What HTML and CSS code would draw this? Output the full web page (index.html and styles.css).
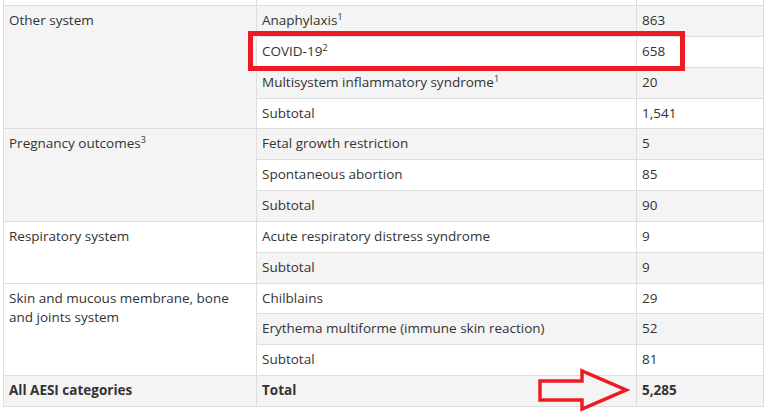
FILE: index.html
```html
<!DOCTYPE html>
<html>
<head>
<meta charset="utf-8">
<link rel="stylesheet" href="styles.css">
</head>
<body>
<div class="wrap">
<table class="aesi">
<colgroup><col class="c1"><col class="c2"><col class="c3"></colgroup>
<tbody>
<tr class="w"><td>&nbsp;</td><td>&nbsp;</td><td>&nbsp;</td></tr>
<tr class="g"><td rowspan="4">Other system</td><td>Anaphylaxis<sup>1</sup></td><td>863</td></tr>
<tr class="w"><td>COVID-19<sup>2</sup></td><td>658</td></tr>
<tr class="g"><td>Multisystem inflammatory syndrome<sup>1</sup></td><td>20</td></tr>
<tr class="w"><td>Subtotal</td><td>1,541</td></tr>
<tr class="g"><td rowspan="3">Pregnancy outcomes<sup>3</sup></td><td>Fetal growth restriction</td><td>5</td></tr>
<tr class="w"><td>Spontaneous abortion</td><td>85</td></tr>
<tr class="g"><td>Subtotal</td><td>90</td></tr>
<tr class="w"><td rowspan="2">Respiratory system</td><td>Acute respiratory distress syndrome</td><td>9</td></tr>
<tr class="g"><td>Subtotal</td><td>9</td></tr>
<tr class="w"><td rowspan="3">Skin and mucous membrane, bone and joints system</td><td>Chilblains</td><td>29</td></tr>
<tr class="g"><td>Erythema multiforme (immune skin reaction)</td><td>52</td></tr>
<tr class="w"><td>Subtotal</td><td>81</td></tr>
<tr class="g total"><td>All AESI categories</td><td>Total</td><td>5,285</td></tr>
</tbody>
</table>
<div class="highlight"></div>
<svg class="arrow" width="100" height="50" viewBox="0 0 100 50">
  <polygon points="10,15 52,15 52,5 96,24 52,43 52,34 10,34" fill="none" stroke="#ed1c24" stroke-width="3.5" stroke-linejoin="miter"/>
</svg>
</div>
</body>
</html>
```
FILE: styles.css
```css
html, body {
  margin: 0;
  padding: 0;
  background: #fff;
}
.wrap {
  position: relative;
  width: 774px;
  height: 420px;
  overflow: hidden;
}
.aesi {
  border-collapse: collapse;
  table-layout: fixed;
  width: 760px;
  margin: -25.85px 0 0 3px;
  font-family: "Open Sans", "Liberation Sans", sans-serif;
  font-size: 13.5px;
  color: #333;
}
.c1 { width: 253px; }
.c2 { width: 380px; }
.c3 { width: 127px; }
.aesi td {
  border: 1px solid #dedede;
  padding: 5px 5px;
  line-height: 19.85px;
  vertical-align: top;
  text-align: left;
}
.aesi tr.g td { background: #f4f4f4; }
.aesi tr.w td { background: #fff; }
.aesi sup {
  font-size: 9px;
  line-height: 0;
  vertical-align: 5px;
}
.aesi tr.total td { font-weight: 700; }
.highlight {
  position: absolute;
  left: 248px;
  top: 31px;
  width: 437px;
  height: 40px;
  box-sizing: border-box;
  border: 5.5px solid #ed1c24;
}
.arrow {
  position: absolute;
  left: 530px;
  top: 366px;
}
```
